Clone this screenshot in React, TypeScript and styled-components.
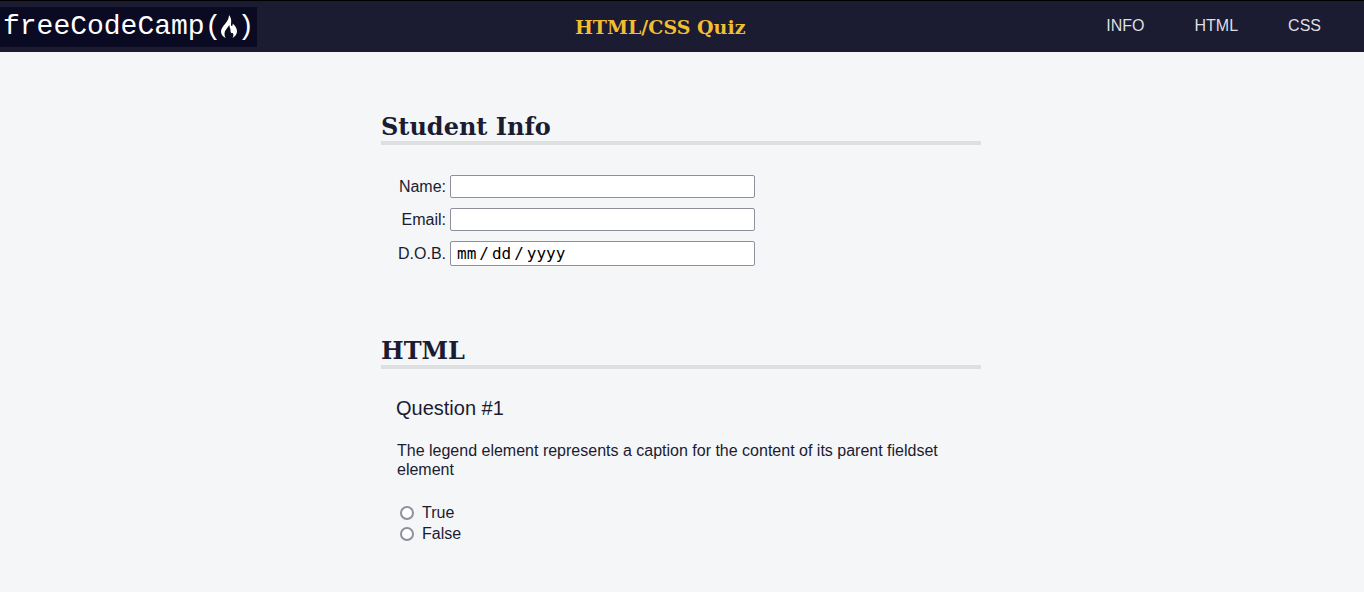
import React from 'react';
import styled, { createGlobalStyle } from 'styled-components';

const GlobalStyle = createGlobalStyle`
  *, *::before, *::after { box-sizing: border-box; }
  body {
    margin: 0;
    background: #f5f6f7;
    color: #1b1b32;
    font-family: "Liberation Sans", Helvetica, Arial, sans-serif;
    font-size: 16px;
    line-height: 19px;
  }
`;

const Header = styled.header`
  display: flex;
  justify-content: space-between;
  align-items: center;
  height: 52px;
  background: #1b1b32;
  border-top: 1px solid #000;
`;

const Logo = styled.div`
  display: flex;
  align-items: center;
  height: 40px;
  width: 257px;
  padding-left: 3px;
  background: #0a0a23;
  color: #fff;
  font-family: "Liberation Mono", monospace;
  font-size: 28px;
  line-height: 40px;
  white-space: nowrap;
`;

const Flame = styled.svg`
  display: block;
  flex: none;
  width: 16px;
  height: 24px;
`;

const Title = styled.h1`
  margin: 0;
  color: #f1be32;
  font-family: "DejaVu Serif", serif;
  font-size: 19px;
  line-height: 24px;
`;

const Nav = styled.nav`
  display: flex;
  gap: 50px;
  padding: 0 43px 3px;
`;

const NavLink = styled.a`
  color: #dfdfe2;
  text-decoration: none;
`;

const Main = styled.main`
  max-width: 602px;
  margin: 0 auto;
  padding: 60px 2px 0 0;
`;

const Section = styled.section`
  margin-bottom: 70px;
`;

const SectionTitle = styled.h2`
  margin: 0;
  border-bottom: 4px solid #dedfe0;
  font-family: "DejaVu Serif", serif;
  font-size: 24px;
  line-height: 29px;
`;

const Fields = styled.div`
  display: grid;
  gap: 10px;
  padding: 30px 0 0 15px;
`;

const Field = styled.div`
  display: flex;
  align-items: center;
  gap: 4px;
`;

const FieldLabel = styled.label`
  width: 50px;
  text-align: right;
`;

const Input = styled.input`
  width: 305px;
  height: 23px;
  padding: 0 6px;
  border: 1px solid #8f8f9d;
  border-radius: 2px;
  background: #fff;
  color: #000;
  font-family: "DejaVu Sans Mono", monospace;
  font-size: 16px;

  &[type='date'] { height: 25px; }
  &::-webkit-calendar-picker-indicator { display: none; }
  &::-webkit-datetime-edit-month-field,
  &::-webkit-datetime-edit-day-field,
  &::-webkit-datetime-edit-year-field { padding: 0; color: #000; }
  &::-webkit-datetime-edit-text { padding: 0 3px; }
`;

const Question = styled.div`
  padding: 28px 15px 0;
`;

const QuestionTitle = styled.h3`
  margin: 0 0 22px;
  font-size: 20px;
  font-weight: 400;
  line-height: 22px;
`;

const Answers = styled.fieldset`
  margin: 0;
  padding: 0 1px;
  border: 0;
`;

const Legend = styled.legend`
  padding: 0;
  margin-bottom: 23px;
`;

const Answer = styled.label`
  display: flex;
  align-items: center;
  gap: 8px;
  height: 21px;
  padding-left: 3px;
`;

const Radio = styled.input`
  appearance: none;
  width: 14px;
  height: 14px;
  margin: 0;
  border: 2px solid #8f8f9d;
  border-radius: 50%;
  background: #fff;

  &:checked { border: 4px solid #0060df; }
`;

const links = [
  { text: 'INFO', href: '#student-info' },
  { text: 'HTML', href: '#html-questions' },
  { text: 'CSS', href: '#css-questions' },
];

const fields = [
  { id: 'name', label: 'Name:', type: 'text' },
  { id: 'email', label: 'Email:', type: 'email' },
  { id: 'dob', label: 'D.O.B.', type: 'date' },
];

export default function App() {
  return (
    <>
      <GlobalStyle />
      <Header>
        <Logo>
          freeCodeCamp(
          <Flame viewBox="0 0 16 24" aria-hidden="true">
            <path
              fill="#fff"
              d="M8 0C9.500 2 10.300 4 10.200 6.500C10.100 8.500 9.600 10.500 10.500 11C11.500 11.300 12 10 11.500 8.500C14 10.500 16 13 16 16.500C16 19.500 14 21.500 11.500 23C12.700 21 12.700 19.500 11.800 18C10.500 18.500 9.300 17.500 9.500 15.500C9.700 13.500 8.500 12.500 8.300 10C6.500 13 3.500 15.500 3.500 18.500C3.500 20.500 4 22 5 23C2 22 0 19.500 0 16.500C0 11 8 7.500 8 0Z"
            />
          </Flame>
          )
        </Logo>
        <Title>HTML/CSS Quiz</Title>
        <Nav>
          {links.map((link) => (
            <NavLink key={link.text} href={link.href}>{link.text}</NavLink>
          ))}
        </Nav>
      </Header>
      <Main>
        <Section id="student-info">
          <SectionTitle>Student Info</SectionTitle>
          <Fields>
            {fields.map((field) => (
              <Field key={field.id}>
                <FieldLabel htmlFor={field.id}>{field.label}</FieldLabel>
                <Input id={field.id} type={field.type} />
              </Field>
            ))}
          </Fields>
        </Section>
        <Section id="html-questions">
          <SectionTitle>HTML</SectionTitle>
          <Question>
            <QuestionTitle>Question #1</QuestionTitle>
            <Answers>
              <Legend>The legend element represents a caption for the content of its parent fieldset element</Legend>
              {['True', 'False'].map((answer) => (
                <Answer key={answer}>
                  <Radio type="radio" name="q1" value={answer} />
                  {answer}
                </Answer>
              ))}
            </Answers>
          </Question>
        </Section>
      </Main>
    </>
  );
}
